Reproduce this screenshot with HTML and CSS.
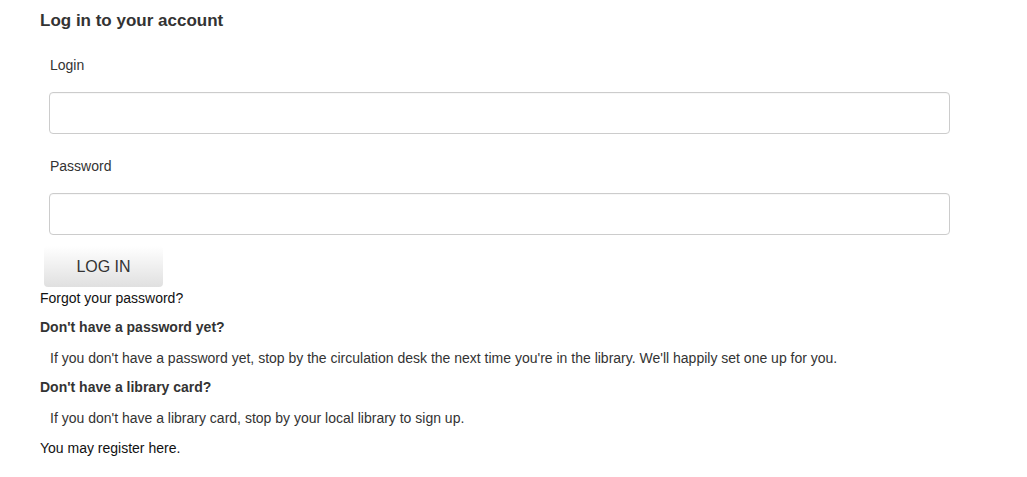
FILE: index.html
```html
<!DOCTYPE html>
<html lang="en">
<head>
<meta charset="utf-8">
<title>Log in to your account</title>
<link rel="stylesheet" href="styles.css">
</head>
<body>
<main class="page">
  <h1 class="title">Log in to your account</h1>
  <form class="login-form">
    <div class="field">
      <label class="field-label" for="login">Login</label>
      <input class="field-input" id="login" type="text">
    </div>
    <div class="field">
      <label class="field-label" for="password">Password</label>
      <input class="field-input" id="password" type="password">
    </div>
    <button class="btn-login" type="button">LOG IN</button>
  </form>
  <p class="link-line">Forgot your password?</p>
  <h2 class="subhead">Don't have a password yet?</h2>
  <p class="info">If you don't have a password yet, stop by the circulation desk the next time you're in the library. We'll happily set one up for you.</p>
  <h2 class="subhead">Don't have a library card?</h2>
  <p class="info">If you don't have a library card, stop by your local library to sign up.</p>
  <p class="link-line">You may register here.</p>
</main>
</body>
</html>
```
FILE: styles.css
```css
html, body {
  margin: 0;
  padding: 0;
  background: #fff;
}

body {
  font-family: "Liberation Sans", Arial, Helvetica, sans-serif;
  font-size: 14px;
  color: #333;
}

.page {
  padding: 11px 40px 0 40px;
}

.title {
  margin: 0;
  font-size: 17px;
  line-height: 20px;
  font-weight: bold;
  color: #333;
}

.login-form {
  display: flex;
  flex-direction: column;
  align-items: flex-start;
  margin-top: 24px;
}

.field {
  display: flex;
  flex-direction: column;
  align-items: flex-start;
  margin-bottom: 22px;
}

.field:last-of-type {
  margin-bottom: 11px;
}

.field-label {
  display: block;
  margin-left: 10px;
  line-height: 20px;
  color: #333;
}

.field-input {
  box-sizing: border-box;
  margin: 17px 0 0 9px;
  width: 901px;
  height: 42px;
  border: 1px solid #ccc;
  border-radius: 4px;
  background: #fff;
  padding: 6px 12px;
  font: inherit;
  box-shadow: inset 0 1px 1px rgba(0,0,0,0.03);
}

.btn-login {
  box-sizing: border-box;
  margin-left: 4px;
  width: 119px;
  height: 41px;
  border: none;
  border-radius: 4px;
  background: linear-gradient(to bottom, #ffffff 0%, #e0e0e0 100%);
  font-family: "Liberation Sans", Arial, Helvetica, sans-serif;
  font-size: 16px;
  color: #333;
  padding: 0;
}

.link-line {
  margin: 1px 0 0 0;
  line-height: 20px;
  color: #111;
}

.subhead {
  margin: 9px 0 0 0;
  font-size: 14px;
  line-height: 20px;
  font-weight: bold;
  color: #333;
}

.info {
  margin: 11px 0 0 10px;
  line-height: 20px;
  color: #333;
}

.info + .link-line {
  margin-top: 10px;
}
```
